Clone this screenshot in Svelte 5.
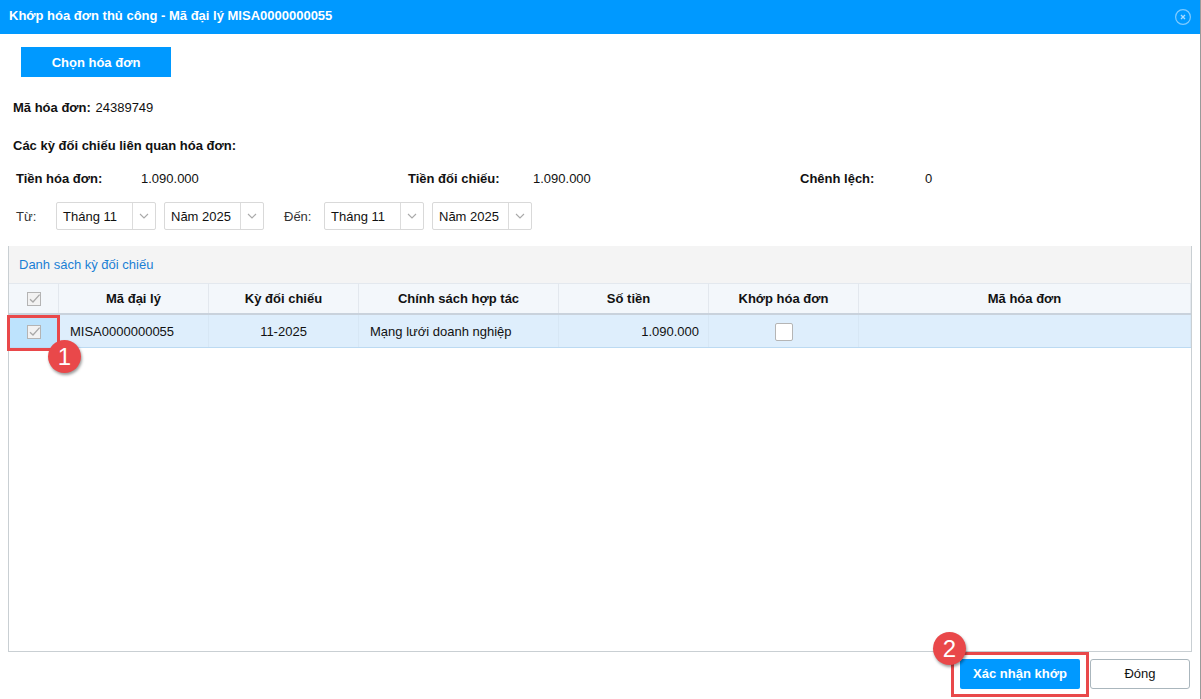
<script>
  const columns = [
    { label: 'Mã đại lý', width: 150, shift: 0 },
    { label: 'Kỳ đối chiếu', width: 150, shift: 0 },
    { label: 'Chính sách hợp tác', width: 200, shift: 0 },
    { label: 'Số tiền', width: 150, shift: 10 },
    { label: 'Khớp hóa đơn', width: 150, shift: 0 }
  ];
</script>

{#snippet check()}
  <svg class="check" viewBox="0 0 14 14" width="14" height="14" aria-hidden="true">
    <rect x="0.5" y="0.5" width="13" height="13" fill="#f2f2f2" stroke="#b4b4b4" />
    <path d="M3 7.2 L6 10 L12.6 2.6" fill="none" stroke="#a8a8a8" stroke-width="1.3" />
  </svg>
{/snippet}

{#snippet select(text)}
  <div class="select">
    <span class="select-text">{text}</span>
    <span class="arrow">
      <svg viewBox="0 0 10 6" width="10" height="6" aria-hidden="true">
        <path d="M1 1 L5 5 L9 1" fill="none" stroke="#a9a9a9" stroke-width="1.1" />
      </svg>
    </span>
  </div>
{/snippet}

<div class="dialog">
  <header class="title">
    <span>Khớp hóa đơn thủ công - Mã đại lý MISA0000000055</span>
    <svg class="close" viewBox="0 0 16 16" width="16" height="16" aria-hidden="true">
      <circle cx="8" cy="8" r="7.4" fill="none" stroke="#7fcbff" stroke-width="1.2" />
      <path d="M6 6 L10 10 M10 6 L6 10" stroke="#a9dcff" stroke-width="1.3" />
    </svg>
  </header>

  <div class="body">
    <button class="pick">Chọn hóa đơn</button>

    <div class="invoice"><b>Mã hóa đơn:</b> <span class="invoice-no">24389749</span></div>
    <div class="periods"><b>Các kỳ đối chiếu liên quan hóa đơn:</b></div>

    <div class="totals">
      <div class="total"><b>Tiền hóa đơn:</b><span>1.090.000</span></div>
      <div class="total"><b>Tiền đối chiếu:</b><span>1.090.000</span></div>
      <div class="total"><b>Chênh lệch:</b><span>0</span></div>
    </div>

    <div class="filters">
      <span class="from">Từ:</span>
      {@render select('Tháng 11')}
      {@render select('Năm 2025')}
      <span class="to">Đến:</span>
      {@render select('Tháng 11')}
      {@render select('Năm 2025')}
    </div>

    <section class="grid">
      <div class="grid-title">Danh sách kỳ đối chiếu</div>
      <div class="row head">
        <div class="cell c-check center">{@render check()}</div>
        {#each columns as c}
          <div class="cell center" style="width:{c.width}px;padding-right:{c.shift}px">{c.label}</div>
        {/each}
        <div class="cell fill center">Mã hóa đơn</div>
      </div>
      <div class="row data">
        <div class="cell c-check center selected">{@render check()}</div>
        <div class="cell w150 pad">MISA0000000055</div>
        <div class="cell w150 center">11-2025</div>
        <div class="cell w200 pad">Mạng lưới doanh nghiệp</div>
        <div class="cell w150 right">1.090.000</div>
        <div class="cell w150 center"><span class="box"></span></div>
        <div class="cell fill"></div>
      </div>
    </section>

    <footer class="actions">
      <button class="confirm">Xác nhận khớp</button>
      <button class="cancel">Đóng</button>
    </footer>
  </div>

  <div class="mark mark-a"></div>
  <div class="badge badge-a">1</div>
  <div class="mark mark-b"></div>
  <div class="badge badge-b">2</div>
</div>

<style>
  :global(body) {
    margin: 0;
    background: #fff;
  }
  .dialog {
    position: relative;
    width: 1201px;
    height: 699px;
    box-sizing: border-box;
    background: #fff;
    border-right: 1px solid #9a9a9a;
    font: 13px/16px "Liberation Sans", Arial, sans-serif;
    color: #111;
    overflow: hidden;
  }
  .title {
    height: 34px;
    background: #0099ff;
    color: #fff;
    font-weight: bold;
    display: flex;
    align-items: center;
    justify-content: space-between;
    padding: 0 9px 2px 9px;
    box-sizing: border-box;
  }
  .close {
    margin-top: 2px;
  }
  .body {
    padding: 13px 8px 0 8px;
  }
  button {
    font: inherit;
    font-weight: bold;
    cursor: pointer;
  }
  .pick {
    display: block;
    width: 150px;
    height: 30px;
    margin-left: 13px;
    border: 0;
    padding: 1px 0 0;
    background: #0099ff;
    color: #fff;
  }
  .invoice {
    margin: 23px 0 0 5px;
  }
  .invoice-no {
    margin-left: 1px;
  }
  .periods {
    margin: 22px 0 0 5px;
  }
  .totals {
    display: flex;
    margin: 17px 0 0 8px;
  }
  .total {
    width: 392px;
    display: flex;
  }
  .total b {
    width: 125px;
  }
  .filters {
    display: flex;
    align-items: center;
    gap: 8px;
    margin: 15px 0 0 8px;
  }
  .from {
    width: 33px;
    margin-right: -1px;
    padding-top: 1px;
    color: #333;
  }
  .to {
    width: 32px;
    margin: 0 0 0 12px;
    padding-top: 1px;
    color: #333;
  }
  .select {
    box-sizing: border-box;
    width: 100px;
    height: 28px;
    display: flex;
    border: 1px solid #d9d9d9;
    border-radius: 2px;
    background: #fff;
  }
  .select-text {
    flex: 1;
    padding: 1px 0 0 6px;
    line-height: 26px;
  }
  .arrow {
    width: 22px;
    border-left: 1px solid #dcdcdc;
    display: flex;
    align-items: center;
    justify-content: center;
  }
  .grid {
    box-sizing: border-box;
    height: 406px;
    margin-top: 16px;
    border: 1px solid #c9cfd3;
    border-top: 0;
  }
  .grid-title {
    box-sizing: border-box;
    height: 37px;
    line-height: 37px;
    background: #f4f4f4;
    color: #1a7fd4;
    padding-left: 10px;
  }
  .row {
    display: flex;
  }
  .head {
    height: 32px;
    background: #f3f7fb;
    border-top: 1px solid #e3e8ee;
    border-bottom: 2px solid #c9d2dc;
    box-sizing: border-box;
    font-weight: bold;
  }
  .data {
    height: 33px;
    background: #deeefc;
    border-bottom: 1px solid #bcdaf2;
    box-sizing: border-box;
  }
  .cell {
    box-sizing: border-box;
    display: flex;
    align-items: center;
    border-right: 1px solid #e3e8ee;
  }
  .data .cell {
    border-right-color: #d7e7f5;
    padding-top: 1px;
  }
  .center {
    justify-content: center;
  }
  .right {
    justify-content: flex-end;
    padding-right: 9px;
  }
  .pad {
    padding-left: 11px;
  }
  .c-check {
    width: 50px;
  }
  .selected {
    background: #bde3fd;
  }
  .w150 {
    width: 150px;
  }
  .w200 {
    width: 200px;
  }
  .fill {
    flex: 1;
  }
  .check {
    display: block;
  }
  .box {
    width: 18px;
    height: 18px;
    box-sizing: border-box;
    background: #fff;
    border: 1px solid #b5b5b5;
    border-radius: 2px;
  }
  .actions {
    display: flex;
    justify-content: flex-end;
    gap: 10px;
    margin: 7px 2px 0 0;
  }
  .confirm {
    width: 120px;
    height: 30px;
    padding: 0;
    border: 0;
    border-radius: 2px;
    background: #0099ff;
    color: #fff;
  }
  .cancel {
    width: 100px;
    height: 30px;
    padding: 0;
    background: #fff;
    color: #111;
    border: 1px solid #aab6bd;
    border-radius: 3px;
    font-weight: normal;
  }
  .mark {
    position: absolute;
    box-sizing: border-box;
    border: 3px solid #e9484a;
  }
  .mark-a {
    left: 7px;
    top: 315px;
    width: 53px;
    height: 36px;
  }
  .mark-b {
    left: 951px;
    top: 652px;
    width: 138px;
    height: 45px;
  }
  .badge {
    position: absolute;
    width: 33px;
    height: 33px;
    border-radius: 50%;
    background: #e9484a;
    box-shadow: 1px 2px 3px rgba(0, 0, 0, 0.4);
    color: #fff;
    font-size: 24px;
    line-height: 33px;
    text-align: center;
  }
  .badge-a {
    left: 48px;
    top: 340px;
  }
  .badge-b {
    left: 933px;
    top: 632px;
  }
</style>
